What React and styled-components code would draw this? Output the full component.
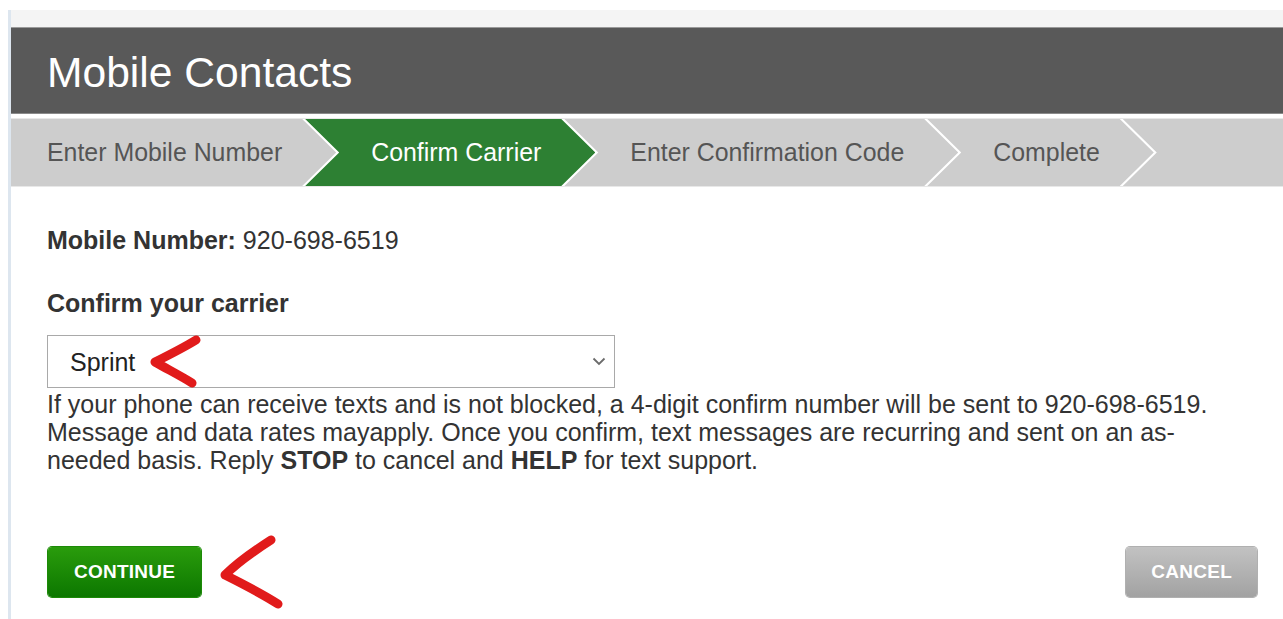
import React from "react";
import styled, { createGlobalStyle } from "styled-components";

const GlobalStyle = createGlobalStyle`
  body {
    margin: 0;
    background: #ffffff;
    font-family: "Liberation Sans", Arial, sans-serif;
  }
`;

const Page = styled.div`
  padding: 10px 0 0 8px;
  min-height: 609px;
`;

const Frame = styled.div`
  border-left: 3px solid #dde6ef;
  min-height: 609px;
`;

const TopStrip = styled.div`
  height: 17px;
  background: #f4f4f4;
`;

const Header = styled.header`
  height: 87px;
  box-sizing: border-box;
  background: #595959;
  border-top: 1px solid #9a9a9a;
  border-bottom: 1px solid #8a8a8a;
  display: flex;
  align-items: center;
  padding: 3px 0 0 36px;
`;

const Title = styled.h1`
  margin: 0;
  color: #ffffff;
  font-size: 42.6px;
  font-weight: normal;
`;

const Steps = styled.ol`
  list-style: none;
  margin: 4px 0 0;
  padding: 0;
  display: flex;
  height: 67px;
  border-top: 1px solid #e8e8e8;
  border-bottom: 1px solid #e8e8e8;
  background: #ffffff;
`;

const ARROW = 34;

const Step = styled.li`
  display: flex;
  align-items: center;
  height: 100%;
  flex: ${(p) => (p.$fill ? "1" : "0 0 auto")};
  margin-left: ${(p) => (p.$first ? "0" : `-${ARROW - 3}px`)};
  padding: 0 ${(p) => (p.$fill ? 0 : 20 + ARROW)}px 0
    ${(p) => (p.$first ? 36 : 32 + ARROW)}px;
  background: ${(p) => (p.$active ? "#2d8033" : "#cdcdcd")};
  color: ${(p) => (p.$active ? "#ffffff" : "#555555")};
  font-size: 24.9px;
  white-space: nowrap;
  clip-path: ${(p) =>
    p.$fill
      ? `polygon(0 0, 100% 0, 100% 100%, 0 100%, ${ARROW}px 50%)`
      : p.$first
      ? `polygon(0 0, calc(100% - ${ARROW}px) 0, 100% 50%, calc(100% - ${ARROW}px) 100%, 0 100%)`
      : `polygon(0 0, calc(100% - ${ARROW}px) 0, 100% 50%, calc(100% - ${ARROW}px) 100%, 0 100%, ${ARROW}px 50%)`};
`;

const Content = styled.section`
  padding: 39px 26px 0 36px;
  color: #333333;
  font-size: 25px;
  line-height: 28px;
`;

const InfoLine = styled.p`
  margin: 0;
`;

const Label = styled.div`
  margin-top: 35px;
  font-weight: bold;
`;

const SelectWrap = styled.div`
  position: relative;
  width: 568px;
  margin-top: 18px;
`;

const Select = styled.select`
  appearance: none;
  width: 100%;
  height: 53px;
  border: 1px solid #a9a9a9;
  border-radius: 0;
  background: #ffffff;
  padding: 0 40px 0 22px;
  font-family: "Liberation Sans", Arial, sans-serif;
  font-size: 25px;
  color: #222222;
`;

const Caret = styled.svg`
  position: absolute;
  right: 9px;
  top: 22px;
  pointer-events: none;
`;

const Mark = styled.svg`
  position: ${(p) => (p.$over ? "absolute" : "static")};
  left: ${(p) => (p.$over ? "96px" : "auto")};
  top: ${(p) => (p.$over ? "-4px" : "auto")};
  flex: 0 0 auto;
  pointer-events: none;
`;

const Notice = styled.p`
  margin: 2px 0 0;
  max-width: 1190px;
`;

const Actions = styled.div`
  display: flex;
  align-items: center;
  margin-top: 57px;
  gap: 14px;
`;

const Button = styled.button`
  height: 50px;
  border-radius: 4px;
  border: none;
  padding: 0 ${(p) => (p.$primary ? 26 : 25)}px;
  font-family: "Liberation Sans", Arial, sans-serif;
  font-size: 19px;
  font-weight: bold;
  letter-spacing: 0.25px;
  color: #ffffff;
  background: ${(p) =>
    p.$primary
      ? "linear-gradient(#2a9c0c, #0c7700)"
      : "linear-gradient(#c2c2c2, #a2a2a2)"};
  box-shadow: ${(p) =>
    p.$primary ? "0 0 0 1px #1d8a08" : "0 0 0 1px #b0b0b0"};
  margin-left: ${(p) => (p.$push ? "auto" : "1px")};
  cursor: pointer;
`;

const RedMark = ({ d, w, h, over }) => (
  <Mark $over={over} width={w} height={h} viewBox={`0 0 ${w} ${h}`}>
    <path
      d={d}
      fill="none"
      stroke="#e11b1b"
      strokeWidth="9"
      strokeLinecap="round"
      strokeLinejoin="round"
    />
  </Mark>
);

const steps = [
  "Enter Mobile Number",
  "Confirm Carrier",
  "Enter Confirmation Code",
  "Complete",
];

export default function App() {
  return (
    <>
      <GlobalStyle />
      <Page>
        <Frame>
          <TopStrip />
          <Header>
            <Title>Mobile Contacts</Title>
          </Header>
          <Steps>
            {steps.map((s, i) => (
              <Step key={s} $first={i === 0} $active={i === 1}>
                {s}
              </Step>
            ))}
            <Step $fill />
          </Steps>
          <Content>
            <InfoLine>
              <b>Mobile Number:</b> 920-698-6519
            </InfoLine>
            <Label>Confirm your carrier</Label>
            <SelectWrap>
              <Select defaultValue="sprint">
                <option value="sprint">Sprint</option>
              </Select>
              <Caret width="14" height="9" viewBox="0 0 14 9">
                <path
                  d="M1.5 1.5 L7 7 L12.5 1.5"
                  fill="none"
                  stroke="#6b6b6b"
                  strokeWidth="1.8"
                />
              </Caret>
              <RedMark
                over
                w={58}
                h={58}
                d="M53 9 C40 17, 24 25, 12 31 C24 38, 38 45, 49 52"
              />
            </SelectWrap>
            <Notice>
              If your phone can receive texts and is not blocked, a 4-digit
              confirm number will be sent to 920-698-6519. Message and data
              rates mayapply. Once you confirm, text messages are recurring and
              sent on an as-needed basis. Reply <b>STOP</b> to cancel and{" "}
              <b>HELP</b> for text support.
            </Notice>
            <Actions>
              <Button $primary>CONTINUE</Button>
              <RedMark
                w={74}
                h={82}
                d="M56 9 C42 18, 22 32, 10 44 C26 52, 46 62, 63 73"
              />
              <Button $push>CANCEL</Button>
            </Actions>
          </Content>
        </Frame>
      </Page>
    </>
  );
}
